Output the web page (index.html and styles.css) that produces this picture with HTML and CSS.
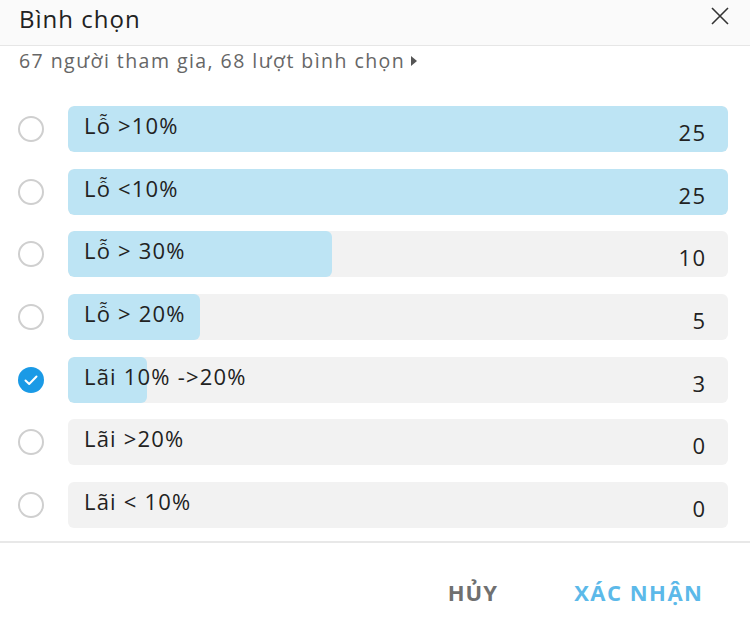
FILE: index.html
```html
<!DOCTYPE html>
<html lang="vi">
<head>
<meta charset="utf-8">
<link rel="stylesheet" href="styles.css">
</head>
<body>
<div class="dialog">
  <div class="header">
    <div class="title">Bình chọn</div>
    <svg class="close" width="20" height="20" viewBox="0 0 20 20"><path d="M2 2 L18 18 M18 2 L2 18" stroke="#333" stroke-width="1.6" fill="none"/></svg>
  </div>
  <div class="sub">67 người tham gia, 68 lượt bình chọn <span class="tri"></span></div>
  <div class="options">
    <div class="row"><span class="radio"></span><div class="bar"><div class="fill" style="width:100%"></div><span class="label">Lỗ &gt;10%</span><span class="count">25</span></div></div>
    <div class="row"><span class="radio"></span><div class="bar"><div class="fill" style="width:100%"></div><span class="label">Lỗ &lt;10%</span><span class="count">25</span></div></div>
    <div class="row"><span class="radio"></span><div class="bar"><div class="fill" style="width:40%"></div><span class="label">Lỗ &gt; 30%</span><span class="count">10</span></div></div>
    <div class="row"><span class="radio"></span><div class="bar"><div class="fill" style="width:20%"></div><span class="label">Lỗ &gt; 20%</span><span class="count">5</span></div></div>
    <div class="row"><span class="radio checked"><svg width="26" height="26" viewBox="0 0 26 26"><circle cx="13" cy="13" r="13" fill="#1a9ae6"/><path d="M7.5 13.5 L11.2 17 L18.5 9.5" stroke="#fff" stroke-width="2" fill="none" stroke-linecap="round" stroke-linejoin="round"/></svg></span><div class="bar"><div class="fill" style="width:12%"></div><span class="label">Lãi 10% -&gt;20%</span><span class="count">3</span></div></div>
    <div class="row"><span class="radio"></span><div class="bar"><div class="fill" style="width:0%"></div><span class="label">Lãi &gt;20%</span><span class="count">0</span></div></div>
    <div class="row"><span class="radio"></span><div class="bar"><div class="fill" style="width:0%"></div><span class="label">Lãi &lt; 10%</span><span class="count">0</span></div></div>
  </div>
  <div class="footer">
    <span class="btn cancel">HỦY</span>
    <span class="btn ok">XÁC NHẬN</span>
  </div>
</div>
</body>
</html>
```
FILE: styles.css
```css
* { box-sizing: border-box; }
html, body { margin: 0; padding: 0; background: #fff; }
body { font-family: "Open Sans", "Noto Sans", sans-serif; color: #222; width: 750px; height: 624px; overflow: hidden; }
.dialog { width: 750px; }
.header {
  height: 46px;
  background: #fafafa;
  border-bottom: 1px solid #e6e6e6;
  display: flex;
  align-items: center;
  justify-content: space-between;
  padding: 0 20px 0 19px;
}
.title { font-size: 24px; letter-spacing: 1px; color: #222; margin-top: -8px; }
.close { margin-top: -14px; }
.sub {
  font-size: 19.5px;
  letter-spacing: 1.45px;
  color: #666;
  padding: 0 0 0 19px;
  height: 28px;
  display: flex;
  align-items: center;
  gap: 6px;
}
.tri {
  width: 0; height: 0;
  border-left: 6px solid #555;
  border-top: 5px solid transparent;
  border-bottom: 5px solid transparent;
  margin-top: 2px;
}
.options {
  padding: 32px 22px 0 18px;
  display: flex;
  flex-direction: column;
  gap: 16.7px;
}
.row { display: flex; align-items: center; gap: 24px; }
.radio {
  width: 26px; height: 26px;
  border: 2px solid #cfcfcf;
  border-radius: 50%;
  flex: none;
}
.radio.checked { border: none; }
.radio svg { display: block; }
.bar {
  position: relative;
  flex: 1;
  height: 46px;
  background: #f2f2f2;
  border-radius: 6px;
  display: flex;
  align-items: center;
  justify-content: space-between;
  padding: 0 23px 0 16px;
  overflow: hidden;
}
.fill {
  position: absolute;
  left: 0; top: 0; bottom: 0;
  background: #bde4f4;
  border-radius: 6px;
}
.label { position: relative; font-size: 22px; letter-spacing: 1.2px; color: #222; margin-top: -8px; }
.count { position: relative; font-size: 22px; letter-spacing: 1.4px; margin-right: -1.4px; color: #222; margin-top: 6px; }
.footer {
  margin-top: 13px;
  border-top: 2px solid #e8e8e8;
  height: 82px;
  display: flex;
  align-items: center;
  justify-content: flex-end;
  padding: 0 48px 0 0;
  gap: 76px;
}
.btn { font-size: 22px; font-weight: 700; letter-spacing: 1.1px; margin-top: 18px; }
.cancel { color: #707070; }
.ok { color: #5cb9e9; letter-spacing: 1.5px; margin-right: -1.5px; }
```
